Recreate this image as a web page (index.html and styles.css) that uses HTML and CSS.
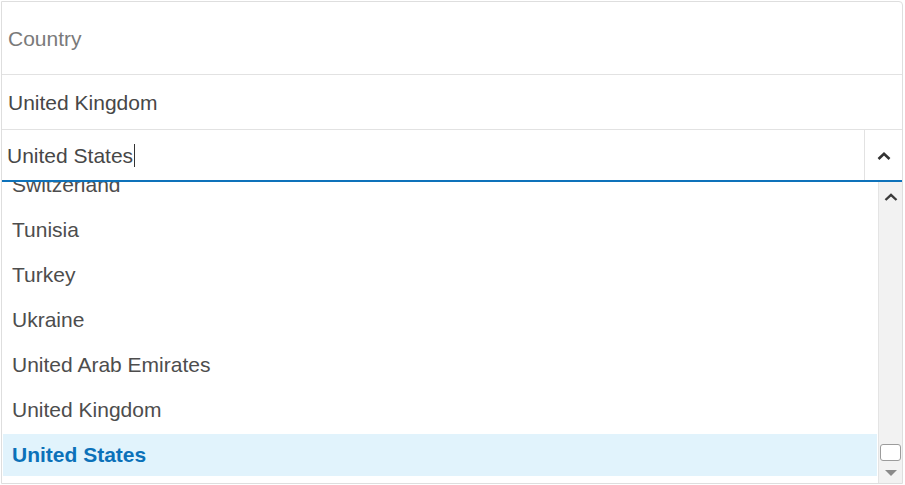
FILE: index.html
```html
<!DOCTYPE html>
<html>
<head>
<meta charset="utf-8">
<link rel="stylesheet" href="styles.css">
</head>
<body>
<div class="wrap">
  <div class="row row-ph"><span class="ph">Country</span></div>
  <div class="row row-val"><span class="val">United Kingdom</span></div>
  <div class="row row-input">
    <div class="input"><span class="val">United States</span><span class="caret"></span></div>
    <div class="btn">
      <svg width="14" height="8" viewBox="0 0 14 8"><path d="M1.5 7 L7 1.8 L12.5 7" fill="none" stroke="#333" stroke-width="2.6"/></svg>
    </div>
  </div>
  <div class="list">
    <div class="items">
      <div class="item first">Switzerland</div>
      <div class="item">Tunisia</div>
      <div class="item">Turkey</div>
      <div class="item">Ukraine</div>
      <div class="item">United Arab Emirates</div>
      <div class="item">United Kingdom</div>
      <div class="item sel">United States</div>
    </div>
    <div class="sb">
      <div class="sb-up">
        <svg width="14" height="8" viewBox="0 0 14 8"><path d="M1.5 7 L7 1.8 L12.5 7" fill="none" stroke="#3a3a3a" stroke-width="2.4"/></svg>
      </div>
      <div class="sb-track"></div>
      <div class="sb-thumb"></div>
      <div class="sb-down">
        <svg width="12" height="6" viewBox="0 0 12 6"><path d="M0 0 H12 L6 6 Z" fill="#8a8a8a"/></svg>
      </div>
    </div>
  </div>
</div>
</body>
</html>
```

FILE: styles.css
```css
html, body {
  margin: 0;
  padding: 0;
  background: #fff;
}
body {
  font-family: "Liberation Sans", Arial, sans-serif;
  font-size: 21px;
}
.wrap {
  margin: 1px 0 0 1px;
  width: 900px;
  border: 1px solid #dedede;
  border-radius: 0 4px 0 0;
  display: flex;
  flex-direction: column;
}
.row {
  display: flex;
  align-items: center;
  border-bottom: 1px solid #e2e2e2;
  box-sizing: border-box;
}
.row-ph {
  height: 73px;
  padding: 2px 0 0 6px;
}
.row-val {
  height: 55px;
  padding: 2px 0 0 6px;
}
.row-input {
  height: 52px;
  border-bottom: 2px solid #0e72ba;
  align-items: stretch;
}
.ph {
  color: #7a7a7a;
}
.val {
  color: #474747;
}
.input {
  flex: 1;
  display: flex;
  align-items: center;
  padding: 1px 0 0 5px;
}
.caret {
  display: inline-block;
  width: 1px;
  height: 23px;
  background: #333;
  margin-left: 1px;
}
.btn {
  width: 37px;
  border-left: 1px solid #e2e2e2;
  display: flex;
  align-items: center;
  justify-content: center;
}
.btn svg {
  margin-top: 1px;
}
.list {
  height: 301px;
  display: flex;
  overflow: hidden;
}
.items {
  flex: 1;
  display: flex;
  flex-direction: column;
}
.item {
  flex: none;
  height: 42px;
  margin: 0 1px 3px 1px;
  padding-left: 9px;
  display: flex;
  align-items: center;
  color: #4d4d4d;
}
.item.first {
  margin-top: -18px;
}
.item.sel {
  background: #e1f3fc;
  color: #0b71b9;
  font-weight: bold;
}
.sb {
  width: 23px;
  border-left: 1px solid #e4e4e4;
  background: #f2f2f2;
  display: flex;
  flex-direction: column;
  align-items: center;
}
.sb-up {
  height: 24px;
  display: flex;
  align-items: flex-end;
  justify-content: center;
  width: 100%;
}
.sb-up svg {
  margin-bottom: 5px;
}
.sb-track {
  flex: 1;
}
.sb-thumb {
  width: 19px;
  height: 15px;
  border: 1px solid #9c9c9c;
  border-radius: 3px;
  background: #fff;
  margin-bottom: 9px;
}
.sb-down {
  height: 13px;
  display: flex;
  justify-content: center;
  align-items: flex-start;
  width: 100%;
}
```
